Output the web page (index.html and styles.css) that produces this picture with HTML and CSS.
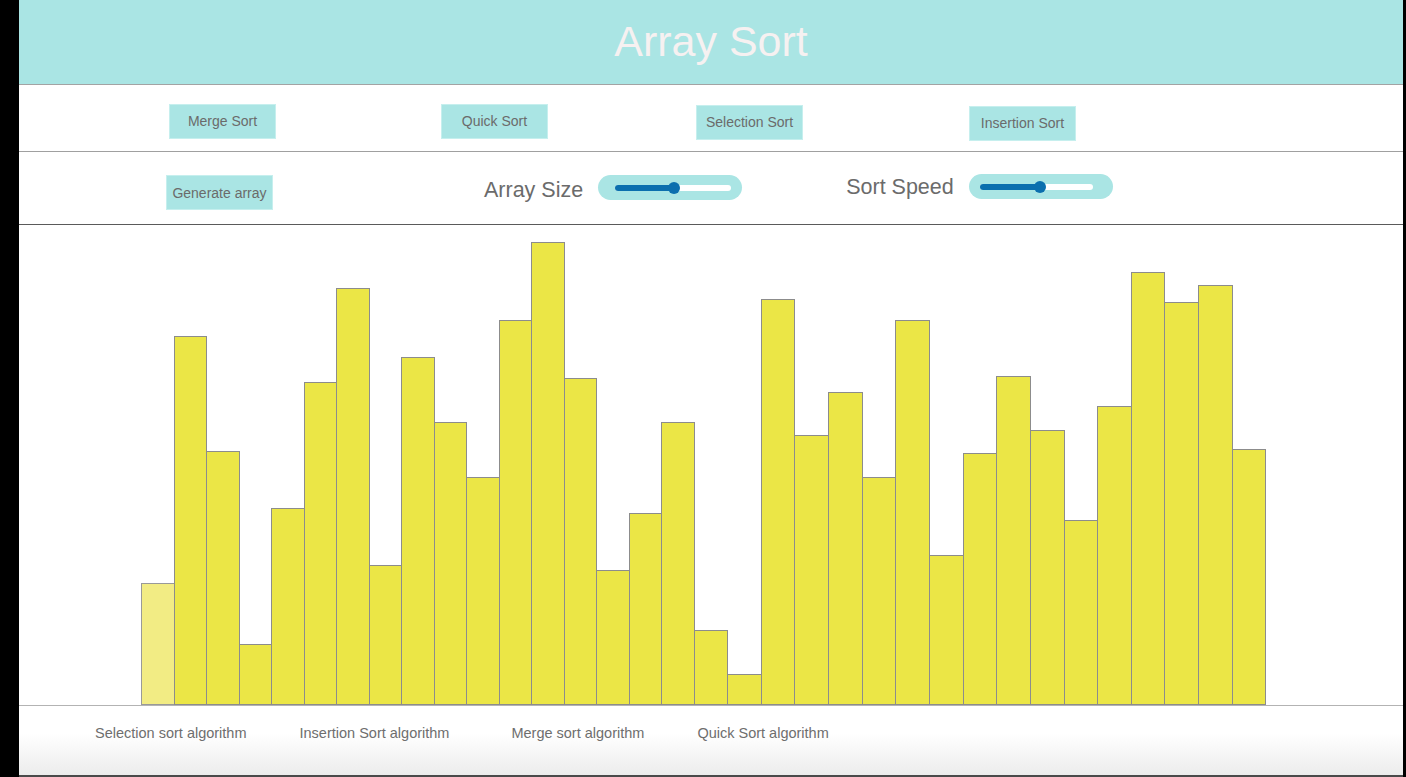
FILE: index.html
```html
<!DOCTYPE html>
<html lang="en">
<head>
<meta charset="utf-8">
<title>Array Sort</title>
<link rel="stylesheet" href="styles.css">
</head>
<body>
<div class="page">
  <header class="header"><h1 class="title">Array Sort</h1></header>

  <section class="row row-algos">
    <button class="btn">Merge Sort</button>
    <button class="btn">Quick Sort</button>
    <button class="btn">Selection Sort</button>
    <button class="btn">Insertion Sort</button>
  </section>

  <section class="row row-controls">
    <button class="btn btn-generate">Generate array</button>
    <label class="ctl-label label-size">Array Size</label>
    <div class="slider slider-size">
      <div class="track"><div class="fill" style="width:59px"></div><div class="thumb" style="left:59px"></div></div>
    </div>
    <label class="ctl-label label-speed">Sort Speed</label>
    <div class="slider slider-speed">
      <div class="track"><div class="fill" style="width:60px"></div><div class="thumb" style="left:60px"></div></div>
    </div>
  </section>

  <main class="chart">
    <div class="bars">
      <div class="bar bar-active" style="height:122px"></div>
      <div class="bar" style="height:369px"></div>
      <div class="bar" style="height:254px"></div>
      <div class="bar" style="height:61px"></div>
      <div class="bar" style="height:197px"></div>
      <div class="bar" style="height:323px"></div>
      <div class="bar" style="height:417px"></div>
      <div class="bar" style="height:140px"></div>
      <div class="bar" style="height:348px"></div>
      <div class="bar" style="height:283px"></div>
      <div class="bar" style="height:228px"></div>
      <div class="bar" style="height:385px"></div>
      <div class="bar" style="height:463px"></div>
      <div class="bar" style="height:327px"></div>
      <div class="bar" style="height:135px"></div>
      <div class="bar" style="height:192px"></div>
      <div class="bar" style="height:283px"></div>
      <div class="bar" style="height:75px"></div>
      <div class="bar" style="height:31px"></div>
      <div class="bar" style="height:406px"></div>
      <div class="bar" style="height:270px"></div>
      <div class="bar" style="height:313px"></div>
      <div class="bar" style="height:228px"></div>
      <div class="bar" style="height:385px"></div>
      <div class="bar" style="height:150px"></div>
      <div class="bar" style="height:252px"></div>
      <div class="bar" style="height:329px"></div>
      <div class="bar" style="height:275px"></div>
      <div class="bar" style="height:185px"></div>
      <div class="bar" style="height:299px"></div>
      <div class="bar" style="height:433px"></div>
      <div class="bar" style="height:403px"></div>
      <div class="bar" style="height:420px"></div>
      <div class="bar" style="height:256px"></div>
    </div>
  </main>

  <footer class="footer">
    <span class="algo-link">Selection sort algorithm</span>
    <span class="algo-link">Insertion Sort algorithm</span>
    <span class="algo-link">Merge sort algorithm</span>
    <span class="algo-link">Quick Sort algorithm</span>
  </footer>
</div>
</body>
</html>
```

FILE: styles.css
```css
* { box-sizing: border-box; }

html, body {
  margin: 0;
  padding: 0;
  background: #000;
  height: 777px;
  overflow: hidden;
}

body {
  font-family: "Liberation Sans", Arial, Helvetica, sans-serif;
  color: #6b6b6b;
}

.page {
  margin-left: 19px;
  width: 1384px;
  height: 777px;
  background: #fff;
  display: flex;
  flex-direction: column;
}

.header {
  height: 85px;
  background: #aae5e4;
  border-bottom: 1px solid #a3a3a3;
  display: flex;
  align-items: center;
  justify-content: center;
}

.title {
  margin: 0;
  font-weight: normal;
  font-size: 43px;
  color: #f6f1f1;
  line-height: 1;
  padding-bottom: 2px;
}

.row {
  display: flex;
  align-items: center;
  border-bottom: 1px solid #a0a0a0;
}

.row-algos {
  height: 67px;
  padding-left: 150px;
  padding-top: 6px;
}

.row-algos .btn:nth-child(1) { margin-right: 165px; }
.row-algos .btn:nth-child(2) { margin-right: 148px; }
.row-algos .btn:nth-child(3) { margin-right: 166px; margin-top: 2px; }
.row-algos .btn:nth-child(4) { margin-top: 4px; }

.btn {
  width: 107px;
  height: 35px;
  background: #aae5e4;
  border: 1px solid #c6efee;
  color: #6b6b6b;
  font-family: "Liberation Sans", Arial, Helvetica, sans-serif;
  font-size: 14px;
  padding: 0;
  cursor: pointer;
}

.row-controls {
  height: 73px;
  padding-left: 147px;
  border-bottom: 1px solid #5a5a5a;
}

.btn-generate {
  margin-top: 9px;
  margin-right: 211px;
}

.ctl-label {
  font-size: 21.5px;
  color: #6b6b6b;
  margin-right: 15px;
}

.label-size { margin-top: 5px; }
.label-speed { margin-left: 104px; margin-top: -1px; }

.slider {
  width: 144px;
  height: 25px;
  border-radius: 13px;
  background: #aae5e4;
  display: flex;
  align-items: center;
}

.slider-size { padding-left: 17px; padding-right: 11px; margin-top: -1px; }
.slider-speed { padding-left: 11px; padding-right: 20px; margin-top: -3px; }

.track {
  position: relative;
  flex: 1;
  height: 6px;
  border-radius: 3px;
  background: #fff;
}

.fill {
  height: 6px;
  border-radius: 3px;
  background: #0b6fae;
}

.thumb {
  position: absolute;
  top: -3px;
  width: 12px;
  height: 12px;
  margin-left: -6px;
  border-radius: 50%;
  background: #0b6fae;
}

.chart {
  flex: 1;
  display: flex;
  align-items: flex-end;
  padding-left: 122px;
}

.bars {
  width: 1126px;
  height: 100%;
  display: flex;
  align-items: flex-end;
}

.bar {
  flex: 0 0 34.65px;
  background: #ebe646;
  border: 1px solid #8c8c8c;
  margin-right: -1px;
}

.bar:nth-child(-n+17) { flex-basis: 33.5px; }

.bar-active { background: #f2ec84; border-color: #999; }

.footer {
  height: 72px;
  border-top: 1px solid #b3b3b3;
  border-bottom: 2px solid #4a4a4a;
  background: linear-gradient(to bottom, #fff 0%, #fff 40%, #ececec 100%);
  display: flex;
  align-items: flex-start;
  padding-left: 76px;
  padding-top: 19px;
}

.algo-link {
  font-size: 14.5px;
  color: #6e6e6e;
}

.algo-link:nth-child(1) { margin-right: 53px; }
.algo-link:nth-child(2) { margin-right: 62px; }
.algo-link:nth-child(3) { margin-right: 53px; }
```
